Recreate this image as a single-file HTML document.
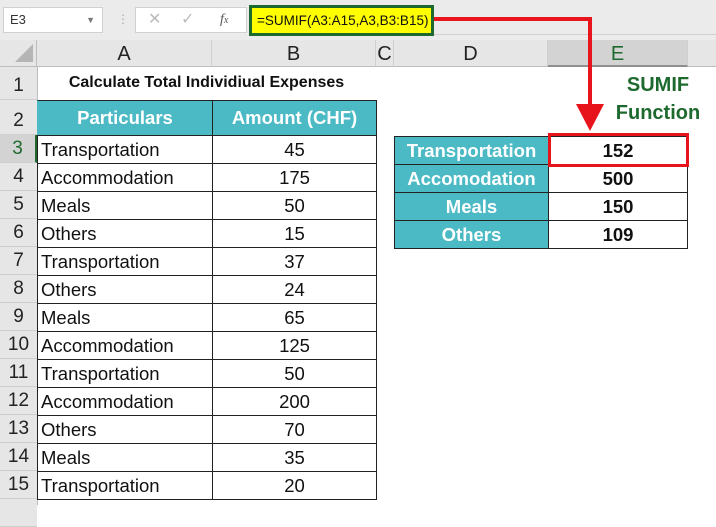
<!DOCTYPE html>
<html><head><style>
*{margin:0;padding:0;box-sizing:border-box}
body{width:716px;height:505px;overflow:hidden;background:#fff;font-family:"Liberation Sans",sans-serif;position:relative}
.a{position:absolute}
.rn{position:absolute;left:0;width:37px;background:#e6e6e6;border-bottom:1px solid #cfcfcf;font-size:19px;color:#222;text-align:center;display:flex;align-items:flex-end;justify-content:center;padding-bottom:2px}
.ch{position:absolute;top:40px;height:27px;background:#e6e6e6;border-right:1px solid #cfcfcf;border-bottom:1px solid #bdbdbd;font-size:20px;text-align:center;line-height:29px;color:#222}
.c{position:absolute;height:29px;border:1px solid #222;font-size:18.5px;line-height:27px;color:#111;white-space:nowrap}
.t{background:#4bbac5;color:#fff;font-weight:bold;text-align:center}
.b{font-weight:bold;text-align:center}
</style></head><body>
<div class="a" style="left:0;top:0;width:716px;height:40px;background:#ebebeb"></div>
<div class="a" style="left:3px;top:7px;width:100px;height:26px;background:#fff;border:1px solid #d0d0d0;font-size:13px;line-height:24px;padding-left:6px;color:#333">E3<span style="position:absolute;right:7px;top:0;font-size:9px;color:#777">&#9660;</span></div>
<div class="a" style="left:117px;top:12px;color:#aaa;font-size:12px">&#8942;</div>
<div class="a" style="left:135px;top:7px;width:112px;height:26px;background:#fff;border:1px solid #d0d0d0;font-size:16px;line-height:24px;color:#bbb"><span style="position:absolute;left:12px">&#10005;</span><span style="position:absolute;left:45px">&#10003;</span><span style="position:absolute;left:84px;color:#555;font-family:'Liberation Serif',serif;font-style:italic;font-size:14px">f<span style="font-size:10px">x</span></span></div>
<div class="a" style="left:249px;top:5px;width:185px;height:31px;background:#ffff00;border:3px solid #1e6a2e;font-size:13.5px;line-height:25px;padding-left:5px;color:#111">=SUMIF(A3:A15,A3,B3:B15)</div>
<div class="a" style="left:434px;top:34px;width:282px;height:1px;background:#d0d0d0"></div>
<div class="a" style="left:0;top:40px;width:37px;height:27px;background:#e6e6e6;border-right:1px solid #bdbdbd;border-bottom:1px solid #bdbdbd"><div style="position:absolute;right:3px;bottom:4px;width:0;height:0;border-left:18px solid transparent;border-bottom:18px solid #b5b5b5"></div></div>
<div class="ch" style="left:37px;width:175px">A</div>
<div class="ch" style="left:212px;width:164px">B</div>
<div class="ch" style="left:376px;width:18px">C</div>
<div class="ch" style="left:394px;width:154px">D</div>
<div class="ch" style="left:548px;width:140px;background:#d3d3d3;color:#1e6a2e;border-bottom:2px solid #8f8f8f">E</div>
<div class="ch" style="left:688px;width:28px;border-right:none"></div>
<div class="rn" style="top:67px;height:33px">1</div>
<div class="rn" style="top:100px;height:35px">2</div>
<div class="rn" style="top:135px;height:28px;background:#d3d3d3;color:#1e6a2e;border-right:2px solid #1e6a2e">3</div>
<div class="rn" style="top:163px;height:28px">4</div>
<div class="rn" style="top:191px;height:28px">5</div>
<div class="rn" style="top:219px;height:28px">6</div>
<div class="rn" style="top:247px;height:28px">7</div>
<div class="rn" style="top:275px;height:28px">8</div>
<div class="rn" style="top:303px;height:28px">9</div>
<div class="rn" style="top:331px;height:28px">10</div>
<div class="rn" style="top:359px;height:28px">11</div>
<div class="rn" style="top:387px;height:28px">12</div>
<div class="rn" style="top:415px;height:28px">13</div>
<div class="rn" style="top:443px;height:28px">14</div>
<div class="rn" style="top:471px;height:28px">15</div>
<div class="rn" style="top:499px;height:28px"></div>
<div class="a" style="left:37px;top:67px;width:1px;height:438px;background:#bdbdbd"></div>
<div class="a" style="left:37px;top:74px;width:339px;text-align:center;font-size:16px;font-weight:bold;color:#111">Calculate Total Individiual Expenses</div>
<div class="c t" style="left:37px;top:100px;width:176px;height:36px;line-height:34px;border-color:#222 #222 #222 #4bbac5">Particulars</div>
<div class="c t" style="left:212px;top:100px;width:165px;height:36px;line-height:34px">Amount (CHF)</div>
<div id="rows"></div>
<script>
var d=[["Transportation",45],["Accommodation",175],["Meals",50],["Others",15],["Transportation",37],["Others",24],["Meals",65],["Accommodation",125],["Transportation",50],["Accommodation",200],["Others",70],["Meals",35],["Transportation",20]];
var h="";d.forEach(function(r,i){var y=135+i*28;h+='<div class="c" style="left:37px;top:'+y+'px;width:176px;padding-left:3px">'+r[0]+'</div><div class="c" style="left:212px;top:'+y+'px;width:165px;text-align:center">'+r[1]+'</div>';});
var s=[["Transportation",152],["Accomodation",500],["Meals",150],["Others",109]];
s.forEach(function(r,i){var y=136+i*28;h+='<div class="c t" style="left:394px;top:'+y+'px;width:155px">'+r[0]+'</div><div class="c b" style="left:548px;top:'+y+'px;width:140px">'+r[1]+'</div>';});
document.getElementById("rows").innerHTML=h;
</script>
<div class="a" style="left:548px;top:133px;width:141px;height:34px;border:3px solid #e8141b"></div>
<div class="a" style="left:600px;top:71px;width:116px;text-align:center;font-size:20px;font-weight:bold;color:#1e6a2e;line-height:28px">SUMIF<br>Function</div>
<div class="a" style="left:434px;top:17px;width:158px;height:4px;background:#e8141b"></div>
<div class="a" style="left:588px;top:17px;width:4px;height:88px;background:#e8141b"></div>
<div class="a" style="left:576px;top:104px;width:0;height:0;border-left:14px solid transparent;border-right:14px solid transparent;border-top:27px solid #e8141b"></div>
</body></html>
